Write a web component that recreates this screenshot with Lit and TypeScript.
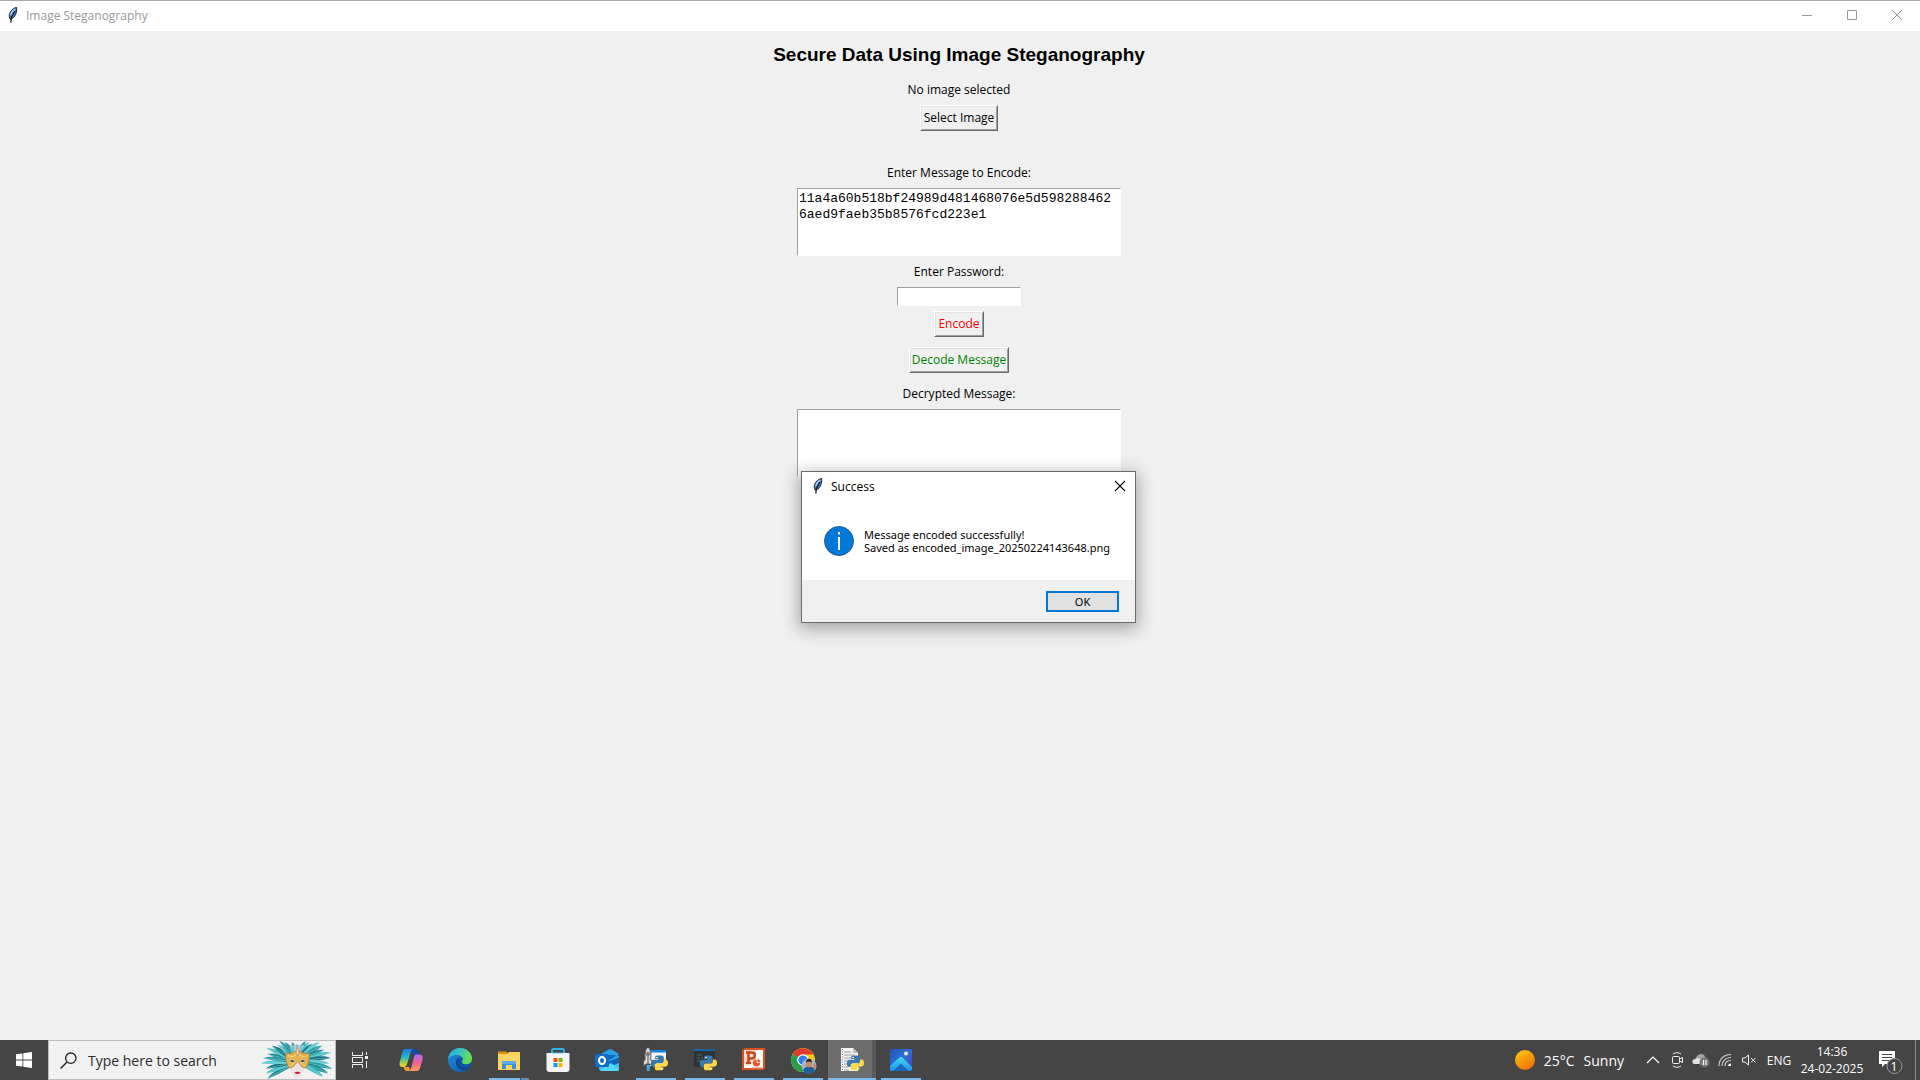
import { LitElement, html, svg, css } from "lit";
import { customElement, state } from "lit/decorators.js";
import { classMap } from "lit/directives/class-map.js";

const quill = html`<svg class="quill" viewBox="0 0 10 16" width="10" height="16" aria-hidden="true">
  <path d="M8.6.4C5.6 1 2.3 3.4 1.4 7.4c-.4 2 .1 3.700.900 4.800C5.600 11.400 7.600 8.600 8.300 5.500 8.700 3.700 8.900 2 8.600.4Z" fill="#4a86cf" stroke="#1c2430" stroke-width="1"/>
  <path d="M7.200 2C5 3.300 3.300 5.600 2.700 8.200" stroke="#b4d2f4" stroke-width="1.300" fill="none"/>
  <path d="M7 4 3.300 10.500 2.800 15.600" stroke="#0b0d12" stroke-width="1.200" fill="none"/>
</svg>`;

const python = svg`<g>
  <path d="M15.500 9.500h3.800c1.500 0 2.500 1 2.500 2.500v3c0 1.500-1 2.300-2.300 2.300h-4.200c-1.600 0-2.600 1-2.600 2.500v1.200h-1.400c-1.600 0-2.500-1.500-2.500-3.600 0-2.300 1-3.700 2.700-3.700h5v-.800h-3.400v-1.200c0-1.500.900-2.200 2.400-2.200Z" fill="#3c78ab"/>
  <path d="M18.900 24.300h-3.800c-1.500 0-2.300-.900-2.300-2.300v-2.300c0-1.400.900-2.200 2.300-2.200h4.200c1.600 0 2.700-1.100 2.700-2.600v-1.300h1.500c1.500 0 2.500 1.500 2.500 3.500 0 2.300-1.100 3.600-2.800 3.600h-4.600v.800h2.900v.700c0 1.400-1 2.100-2.400 2.100Z" fill="#ffd848"/>
  <circle cx="15" cy="11.500" r=".8" fill="#fff"/><circle cx="19.600" cy="22.400" r=".8" fill="#fff"/>
</g>`;

const feathers = Array.from({ length: 27 }, (_, i) => {
  const angle = -116 + (i * 232) / 26;
  const a = (angle * Math.PI) / 180;
  const length = 19 + 17 * Math.abs(Math.sin(a)) ** 1.3 - (i % 3) * 2;
  return { angle, length, bend: angle < 0 ? -2 : 2, tone: ["#1c8b98", "#46bfc0", "#176f84", "#5fc9cd", "#2a9aa8"][i % 5] };
});

const mask = html`<svg class="mask" viewBox="0 0 72 38" width="72" height="38" aria-hidden="true">
  ${feathers.map(
    (f) => svg`<g transform="translate(36 21) rotate(${f.angle})">
      <path d=${`M-1 0C-3 ${-f.length * 0.5} -2.500 ${-f.length * 0.85} ${f.bend} ${-f.length}C2.500 ${-f.length * 0.8} 2 ${-f.length * 0.4} 1 0Z`} fill=${f.tone}/>
      <path d=${`M0 0Q-1 ${-f.length * 0.6} ${f.bend} ${-f.length}`} stroke="#a5e3e0" stroke-width=".4" fill="none"/>
    </g>`,
  )}
  <path d="M29 4h14l-4 10h-6Z" fill="#a9cfd8"/><path d="M32 4v8M36 3v8M40 4v8" stroke="#5b97a6" stroke-width=".8"/>
  <path d="M28 18c0 9 3 17 8.500 18.500C42 35 45 27 45 18Z" fill="#e9e3e6"/>
  <path d="M25 12c3 1 5 1 7-.500l4.500-2.500 4.500 2.500c2 1.500 4 1.500 7 .500 1 5 0 10-3 15-3 0-4.500-1-6-3.500l-2.500-3-2.500 3c-1.500 2.500-3 3.500-6 3.500-3-5-4-10-3-15Z" fill="#e3b04c" stroke="#a9742a" stroke-width=".6"/>
  <path d="M27 14.500c4 2 6.500 1 9.500-2.500 3 3.500 6 4.500 10 2.500M28 24c2 1 4 0 5-2M45 24c-2 1-4 0-5-2" stroke="#f9dd8c" stroke-width="1" fill="none"/>
  <path d="M28.500 19.500c2-1.500 4-1 5.500 1-2 1.500-4 1-5.500-1ZM39 20.500c1.500-2 3.500-2.500 5.500-1-1.500 2-3.500 2.500-5.500 1Z" fill="#3b3138" stroke="#fff" stroke-width=".6"/>
  <path d="M36.500 7c2 2 2 5 0 8-2-3-2-6 0-8Z" fill="#e5cdb0" stroke="#b98540" stroke-width=".5"/>
  <path d="M33.500 31.500c1.200-1 1.800-1 3-.6 1.200-.4 1.800-.4 3 .6-1.800 2-4.200 2-6 0Z" fill="#c81e33"/>
</svg>`;

type App = { name: string; running?: boolean; active?: boolean; split?: boolean; icon: unknown };

const apps: App[] = [
  {
    name: "Copilot",
    icon: svg`<defs>
        <linearGradient id="cpa" x1="0" y1="0" x2="0" y2="1"><stop offset="0" stop-color="#1c7fe6"/><stop offset=".45" stop-color="#25b8c8"/><stop offset=".75" stop-color="#9bcf4a"/><stop offset="1" stop-color="#ffd21f"/></linearGradient>
        <linearGradient id="cpb" x1="0" y1="0" x2="0" y2="1"><stop offset="0" stop-color="#b06cf0"/><stop offset=".5" stop-color="#f0609a"/><stop offset="1" stop-color="#ff9a4c"/></linearGradient>
      </defs>
      <path d="M14 3h4c2 0 2.800 1.400 3.300 3l.8 2.500h-6Z" fill="#1748b5"/>
      <path d="M8.500 3H17c-2 0-2.800 1.500-3.400 3.500l-3.400 11c-.6 2-1.600 3.500-3.600 3.500H6c-3 0-4-2-3.200-5L5.300 6.500C6 4.200 6.700 3 8.500 3Z" fill="url(#cpa)"/>
      <path d="M13 25H10c-2 0-2.700-1.500-3.300-4h5.500Z" fill="#f09a2c"/>
      <path d="M19 8.500h3.300c3 0 4 2 3.200 5l-2 7c-.8 3-1.800 4.500-3.800 4.500H11c2 0 2.700-1.500 3.300-3.500L17 11c.4-1.600 1-2.500 2-2.500Z" fill="url(#cpb)"/>`,
  },
  {
    name: "Microsoft Edge",
    icon: svg`<defs>
        <linearGradient id="eda" x1="0" y1="0" x2="1" y2=".3"><stop offset="0" stop-color="#2aa7e8"/><stop offset=".5" stop-color="#36c3c0"/><stop offset="1" stop-color="#6bdc52"/></linearGradient>
        <linearGradient id="edb" x1="0" y1="0" x2="1" y2="1"><stop offset="0" stop-color="#1e8fe0"/><stop offset="1" stop-color="#1055a8"/></linearGradient>
      </defs>
      <circle cx="14" cy="14" r="12" fill="url(#edb)"/>
      <path d="M2 13.500C2.500 7 7.500 2 14 2c7 0 12 5 12 10.500 0 3.500-2.600 6-6 6-2.800 0-4.300-1.200-4.300-2.300 0-.8 1-1.200 1-3 0-2.200-2.500-4.200-6-4.200-4 0-7.500 2-8.700 4.500Z" fill="url(#eda)"/>
      <path d="M12 12c-3 2-4 10 6 12.500 2.500-.5 5-2.500 6.500-5-6 3.500-12.500.500-12.500-4.500 0-1.200.5-2 1.200-2.800Z" fill="#0c458d"/>
      <path d="M15.700 16.200c-.8-1.500 1.300-2 .9-4 0-.8-2.600-1.200-4.400.2-1 3 1 6 3.500 7 3.500 1.300 6.500.6 8.800-.2.800-.5.500-1.500.500-2.700-1.300 1.400-3 2-5 2-2.500 0-4.300-1.200-4.300-2.300Z" fill="#0e519c"/>`,
  },
  {
    name: "File Explorer",
    running: true,
    split: true,
    icon: svg`<path d="M3 5.500h8.500l2 2.500H3Z" fill="#d99408"/><path d="M3 8h9l2-2h11v18H3Z" fill="#f9cf5e"/>
      <path d="M3 9h22v14H3Z" fill="#fdd565"/>
      <path d="M7 15h14v8h-4v-4h-6v4H7Z" fill="#3e91d8"/><path d="M7 15h14v3H7Z" fill="#58abe8"/>`,
  },
  {
    name: "Microsoft Store",
    icon: svg`<path d="M8 8V5C8 4 8.500 3 9.500 3h9C19.500 3 20 4 20 5v3" fill="none" stroke="#2bb3ee" stroke-width="2"/>
      <path d="M2.500 7h23v16c0 2-1 3-3 3h-17c-2 0-3-1-3-3Z" fill="#f4f4f4"/><path d="M8 7h12" stroke="#5cc4ee" stroke-width="1"/>
      <path d="M9.500 12H13.500v4h-4Z" fill="#f04e1f"/><path d="M14.500 12h4v4h-4Z" fill="#7db900"/><path d="M9.500 17h4v4h-4Z" fill="#00a2ed"/><path d="M14.500 17h4v4h-4Z" fill="#ffb800"/>`,
  },
  {
    name: "Outlook",
    icon: svg`<path d="M5 10 16 3l10 7v4H5Z" fill="#1e8ddb"/><path d="m8 8 10-5 8 5-10 8-8-2Z" fill="#2aa0e6"/>
      <path d="M14 9h9l-7 8-5-2Z" fill="#1766b5"/>
      <path d="M26 10v13c0 1.500-.8 2-2 2H9c-2 0-3-1-3-3v-4Z" fill="#35c3f3"/><path d="M26 11v6L16 21l-4-4Z" fill="#1363b4"/><path d="m7 24 11-7 8 6c0 1.500-1 2-2 2H9Z" fill="#52d9fa"/>
      <rect x="2" y="8" width="14" height="13" rx="1.500" fill="#0f6cc8"/><ellipse cx="9" cy="14.500" rx="3" ry="3.500" fill="none" stroke="#fff" stroke-width="2"/>`,
  },
  {
    name: "Python Launcher",
    running: true,
    icon: svg`<path d="M8 4h16v16H8Z" fill="#eef2f5"/><path d="M8 4h16v2.500H8Z" fill="#1683d8"/>
      <path d="M6 1c-3 3-3.300 7-2.800 12L1.500 16v4L4 18h4l2 2v-4l-1.500-3C9.300 8 9 4 6 1Z" fill="#dcdcdc" stroke="#5a5a5a" stroke-width="1"/>
      <circle cx="6" cy="8" r="1.700" fill="#888" stroke="#444" stroke-width=".6"/><path d="M6 10v8" stroke="#555" stroke-width="1"/>
      <path d="M4.500 19h3.500l-.5 6h-2.500Z" fill="#45a7e8"/>${python}`,
  },
  {
    name: "Python",
    running: true,
    icon: svg`<path d="M3 3h21v18H3Z" fill="#2d3236"/><path d="M3 3h21v2H3Z" fill="#1467a8"/>
      <path d="M6 9h5M6 12h3M10 12h2M6 15h4" stroke="#3f7d4e" stroke-width="1"/>${python}`,
  },
  {
    name: "PowerPoint",
    running: true,
    icon: svg`<path d="M2 4 5 2h20v20l-2 2H2Z" fill="#d9521f"/><path d="M4 4h19v18H4Z" fill="#fff"/>
      <path d="M4 4h12v14H4Z" fill="#f7dccd"/>
      <path d="M8.500 5.500v12M6 6.500h5.500c4.500 0 4.500 6 0 6H9M6 17h5" fill="none" stroke="#c2481c" stroke-width="2.400"/>
      <circle cx="16.500" cy="17" r="3.600" fill="#e4582a"/><path d="M17 16.500v-4a4 4 0 0 1 4 4Z" fill="#e4582a" stroke="#fff" stroke-width=".8"/>
      <path d="M12 22h10" stroke="#e08a67" stroke-width="1.200"/>`,
  },
  {
    name: "Google Chrome",
    running: true,
    icon: svg`<circle cx="14" cy="14" r="12" fill="#f9c80e"/>
      <path d="M14 14 3.600 8A12 12 0 0 1 24.400 8.500H14Z" fill="#e23b2e"/>
      <path d="M14 14 3.600 8A12 12 0 0 0 14 26l5-8Z" fill="#2a9d4c"/>
      <circle cx="14" cy="14" r="5.800" fill="#fff"/><circle cx="14" cy="14" r="4.600" fill="#2f7de9"/>
      <circle cx="20" cy="20" r="7.500" fill="#9db8cf"/>
      <path d="M14 24.500c1-3 3-4 6-4s5 1 6 4a7.500 7.500 0 0 1-12 0Z" fill="#1d5f9c"/>
      <ellipse cx="20" cy="17.500" rx="3" ry="4" fill="#c98a62"/><path d="M17 16.500c0-5 6-5 6 0-2-1.500-4-1.500-6 0Z" fill="#2a201c"/>
      <path d="M25 16.500a7.500 7.500 0 0 1 1.500 7l-2.500-2Z" fill="#d57f52"/>`,
  },
  {
    name: "Image Steganography",
    running: true,
    active: true,
    icon: svg`<path d="M3 2h12l5 5v18H3Z" fill="#f3f3f3"/><path d="M15 2v5h5Z" fill="#bdbdbd"/>
      <path d="M6 6h7M6 9h11M6 12h8M6 15h5M6 18h4M6 21h4M6 24h5" stroke="#9d9d9d" stroke-width="1"/><path d="M4.500 3v22" stroke="#777" stroke-width="1" stroke-dasharray="1 1.500"/>${python}`,
  },
  {
    name: "Photos",
    running: true,
    icon: svg`<defs><linearGradient id="pha" x1="0" y1="0" x2="1" y2="1"><stop offset="0" stop-color="#1c55b5"/><stop offset=".5" stop-color="#2f6fd8"/><stop offset="1" stop-color="#4a3fae"/></linearGradient>
      <linearGradient id="phb" x1="0" y1="0" x2="0" y2="1"><stop offset="0" stop-color="#48dcf8"/><stop offset="1" stop-color="#1c8fe0"/></linearGradient></defs>
      <rect x="3" y="3" width="22" height="22" rx="2" fill="url(#pha)"/><circle cx="19" cy="7.500" r="2" fill="#e8f5ff"/>
      <path d="M3 20 12.500 11.500c1-.9 2-.9 3 0L25 21v2c0 1.300-.7 2-2 2h-2L14 18l-8 7H5c-1.300 0-2-.7-2-2Z" fill="url(#phb)"/>
      <path d="m14 18 8 7H6Z" fill="#1468bd"/>`,
  },
];

@customElement("info-dialog")
class InfoDialog extends LitElement {
  static styles = css`
    :host { display: block; box-sizing: border-box; width: 335px; border: 1px solid #6b6b6b; background: #fff; color: #000;
      font-family: "Noto Sans", sans-serif; font-size: 11px; box-shadow: 0 4px 16px 2px rgba(0, 0, 0, 0.32); }
    .bar { display: flex; align-items: center; box-sizing: border-box; height: 30px; padding: 0 0 2px 11px; }
    .caption { flex: 1; margin: 0 0 0 8px; font-size: 12px; font-weight: 400; font-family: "Open Sans", sans-serif; }
    .close { display: grid; place-items: center; width: 30px; height: 28px; padding: 0; border: 0; background: none; }
    .body { display: flex; align-items: center; gap: 10px; height: 78px; padding: 0 22px; }
    .text { margin: 0; line-height: 13px; white-space: pre; }
    .foot { display: flex; align-items: center; justify-content: flex-end; height: 42px; padding-right: 16px; background: #f0f0f0; }
    .ok { width: 73px; height: 21px; padding: 0; border: 2px solid #0078d7; background: #e1e1e1; color: #000; font: inherit; line-height: 17px; }
  `;

  render() {
    return html`
      <div class="bar">
        ${quill}
        <h2 class="caption">Success</h2>
        <button class="close" aria-label="Close" @click=${this.dismiss}>
          <svg width="12" height="12" viewBox="0 0 12 12"><path d="m1 1 10 10M11 1 1 11" stroke="#000" stroke-width="1.100"/></svg>
        </button>
      </div>
      <div class="body">
        <svg width="30" height="30" viewBox="0 0 30 30" aria-hidden="true">
          <circle cx="15" cy="15" r="14.500" fill="#0078d7" stroke="#1d5c94"/>
          <path d="M15 11v13" stroke="#fff" stroke-width="2"/><path d="M15 6v2.500" stroke="#fff" stroke-width="2"/>
        </svg>
        <p class="text">Message encoded successfully!
Saved as encoded_image_20250224143648.png</p>
      </div>
      <div class="foot"><button class="ok" @click=${this.dismiss}>OK</button></div>
    `;
  }

  private dismiss() {
    this.dispatchEvent(new CustomEvent("dismiss"));
  }
}

@customElement("task-bar")
class TaskBar extends LitElement {
  static styles = css`
    :host { display: flex; align-items: stretch; height: 40px; background: #454545; color: #fff; font-family: "Open Sans", sans-serif; font-size: 12px; }
    button { display: grid; place-items: center; padding: 0; border: 0; background: none; color: inherit; font: inherit; }
    .start, .view { width: 48px; }
    .view { margin-right: 3px; }
    .search { display: flex; align-items: center; box-sizing: border-box; width: 288px; padding: 0 2px 0 11px; border: 1px solid #bcbcbc; background: #f1f1f1; }
    .query { flex: 1; min-width: 0; margin-left: 11px; padding: 0; border: 0; outline: 0; background: none; color: #2c2c2c; font: 14px "Open Sans", sans-serif; }
    .query::placeholder { color: #2c2c2c; opacity: 1; }
    .mask { flex: none; }
    .apps { display: flex; gap: 1px; flex: 1; }
    .app { position: relative; width: 48px; }
    .app svg { width: 28px; height: 28px; }
    .app.active { background: linear-gradient(90deg, #6d6d6d 44px, #5a5a5a 44px); }
    .app.running::after { content: ""; position: absolute; left: 4px; right: 4px; bottom: 0; height: 2px; background: #76b9ed; }
    .app.active::after { left: 0; right: 0; }
    .app.split::after { background: linear-gradient(90deg, #76b9ed 31px, #454545 31px, #454545 32px, #5b8fb9 32px); }
    .weather { display: flex; align-items: center; gap: 9px; margin-right: 17px; font-size: 14px; }
    .tray { display: flex; align-items: center; }
    .tray .icon { width: 24px; height: 40px; }
    .lang { width: 36px; height: 40px; }
    .clock { width: 70px; height: 40px; align-content: center; line-height: 17px; }
    .notes { width: 48px; height: 40px; }
    .peek { width: 5px; height: 40px; border-left: 1px solid #8d8d8d; box-sizing: border-box; }
    .count { font: 13px "Open Sans", sans-serif; fill: #fff; text-anchor: middle; }
  `;

  render() {
    return html`
      <button class="start" aria-label="Start">
        <svg width="16" height="16" viewBox="0 0 16 16"><path d="M0 2.300 6.500 1.400v6.200H0ZM7.300 1.300 16 0v7.600H7.300ZM0 8.400h6.500v6.200L0 13.700ZM7.300 8.400H16V16l-8.700-1.300Z" fill="#fff"/></svg>
      </button>
      <label class="search">
        <svg width="17" height="17" viewBox="0 0 17 17" aria-hidden="true"><circle cx="10.800" cy="6.200" r="5.200" fill="none" stroke="#222" stroke-width="1.300"/><path d="M7 10 .6 16.400" stroke="#222" stroke-width="1.400"/></svg>
        <input class="query" type="text" aria-label="Search" placeholder="Type here to search" />
        ${mask}
      </label>
      <button class="view" aria-label="Task View">
        <svg width="16" height="16" viewBox="0 0 16 16" fill="none" stroke="#f2f2f2"><path d="M.5 0v3.500h10V0M.5 16v-3.500h10V16M.5 5.500h10v5H.5ZM14.500 0v3M14.500 9v7"/><path d="M13 4h3v3h-3Z" fill="#f2f2f2" stroke="none"/></svg>
      </button>
      <nav class="apps" aria-label="Applications">
        ${apps.map(
          (app) => html`<button class=${classMap({ app: true, running: !!app.running, active: !!app.active, split: !!app.split })} aria-label=${app.name}>
            <svg viewBox="0 0 28 28">${app.icon}</svg>
          </button>`,
        )}
      </nav>
      <button>
        <span class="weather">
          <svg width="20" height="20" viewBox="0 0 20 20"><defs><linearGradient id="sun" x1=".2" y1="0" x2=".8" y2="1"><stop offset="0" stop-color="#fdc50b"/><stop offset="1" stop-color="#ed6c09"/></linearGradient></defs><circle cx="10" cy="10" r="10" fill="url(#sun)"/></svg>
          <span>25°C</span><span>Sunny</span>
        </span>
      </button>
      <div class="tray">
        <button class="icon" aria-label="Show hidden icons"><svg width="14" height="8" viewBox="0 0 14 8"><path d="m1 7 6-6 6 6" fill="none" stroke="#fff" stroke-width="1.200"/></svg></button>
        <button class="icon" aria-label="Meet Now"><svg width="14" height="16" viewBox="0 0 14 16" fill="none" stroke="#f2f2f2"><rect x="2.500" y="4.500" width="7" height="7" rx="1"/><path d="m9.500 7 3-1.500v5l-3-1.500M3 2C5 .3 9 .3 11 2M3 14c2 1.700 6 1.700 8 0"/></svg></button>
        <button class="icon" aria-label="OneDrive"><svg width="18" height="16" viewBox="0 0 18 16"><path d="M4 9C3 5 6 2 9 2c3 0 4 2 4.500 4C16 6 17 9 15 11H5Z" fill="#a3a3a3"/><path d="M3 12c-3 0-4-4 0-5 2-2 5-1 6 1 2 0 2 4 0 4Z" fill="#e2e2e2"/><circle cx="12.500" cy="10.500" r="5" fill="#777"/><path d="M11.500 8v5M14 8v5" stroke="#fff" stroke-width="1.200"/></svg></button>
        <button class="icon" aria-label="Network"><svg width="14" height="14" viewBox="0 0 14 14" fill="none" stroke="#cfcfcf" stroke-width="1.200"><path d="M1 13C1 6 6 1.500 13 1.500M4 13c0-5 3.500-8.500 9-8.500M7 13c0-3.500 2.500-5.500 6-5.500"/><path d="M10 13c0-1.500 1-2.500 3-2.500V13Z" fill="#fff" stroke="none"/></svg></button>
        <button class="icon" aria-label="Volume muted"><svg width="16" height="14" viewBox="0 0 16 14" fill="none" stroke="#f2f2f2"><path d="M1.500 5v4H4l3.500 3V2L4 5ZM10 5l4.500 4.500M14.500 5 10 9.500"/></svg></button>
        <button class="lang">ENG</button>
        <button class="clock"><span>14:36</span><span>24-02-2025</span></button>
        <button class="notes" aria-label="1 notification">
          <svg width="28" height="28" viewBox="0 0 28 28"><path d="M2 5h16v13H8l-3 3v-3H2Z" fill="#fff"/><path d="M5 8.500h10M5 11.500h10M5 14.500h7" stroke="#454545"/><circle cx="17.500" cy="20" r="7.500" fill="#454545" stroke="#9a9a9a"/><text class="count" x="17" y="25">1</text></svg>
        </button>
        <button class="peek" aria-label="Show desktop"></button>
      </div>
    `;
  }
}

@customElement("app-root")
class AppRoot extends LitElement {
  static styles = css`
    :host { display: flex; flex-direction: column; min-height: 100vh; background: #f0f0f0; color: #000; font-family: "Open Sans", sans-serif; font-size: 12px; }
    .window { position: relative; display: flex; flex-direction: column; flex: 1; }
    .titlebar { display: flex; align-items: center; box-sizing: border-box; height: 31px; padding: 0 1px 2px 8px; border-top: 1px solid #a9a9a9; background: #fff; color: #999; }
    .title { flex: 1; margin-left: 8px; }
    .control { display: grid; place-items: center; width: 45px; height: 28px; padding: 0; border: 0; background: none; }
    .form { display: flex; flex-direction: column; align-items: center; padding: 10px 2px 0 0; }
    .heading { margin: 0 0 11px; font: bold 19px/28px "Liberation Sans", sans-serif; }
    .label { margin-bottom: 5px; line-height: 20px; }
    .button { box-sizing: border-box; height: 26px; padding: 0 0 2px; border: 1px solid; border-color: #fff #696969 #696969 #fff;
      box-shadow: inset 1px 1px #e3e3e3, inset -1px -1px #a0a0a0; background: #f0f0f0; color: #000; font: inherit; white-space: nowrap; }
    .select { width: 78px; margin-bottom: 32px; }
    .encode { width: 50px; margin-bottom: 10px; color: #f00; }
    .decode { width: 100px; margin-bottom: 11px; color: #008000; }
    .area, .entry { box-sizing: border-box; border: 1px solid #fff; border-color: #a0a0a0 #fff #fff #a0a0a0; background: #fff; color: #000; outline: 0; }
    .area { width: 324px; height: 68px; margin: 0 0 6px; padding: 2px 4px 0 1px; resize: none; overflow: hidden; word-break: break-all; font: 13px/16px "Liberation Mono", monospace; }
    .entry { width: 124px; height: 19px; margin-bottom: 5px; padding: 0 2px; font: inherit; }
    .dialog { position: absolute; top: 471px; left: calc(50% - 159px); }
  `;

  @state() private showDialog = true;

  render() {
    return html`
      <main class="window">
        <header class="titlebar">
          ${quill}
          <span class="title">Image Steganography</span>
          <button class="control" aria-label="Minimize"><svg width="10" height="10"><path d="M0 5.500h10" stroke="#999"/></svg></button>
          <button class="control" aria-label="Maximize"><svg width="10" height="10"><path d="M.5.5h9v9h-9Z" fill="none" stroke="#999"/></svg></button>
          <button class="control" aria-label="Close"><svg width="10" height="10"><path d="m0 0 10 10M10 0 0 10" stroke="#999"/></svg></button>
        </header>
        <section class="form">
          <h1 class="heading">Secure Data Using Image Steganography</h1>
          <span class="label">No image selected</span>
          <button class="button select">Select Image</button>
          <label class="label" for="message">Enter Message to Encode:</label>
          <textarea class="area" id="message" spellcheck="false" .value=${"11a4a60b518bf24989d481468076e5d5982884626aed9faeb35b8576fcd223e1"}></textarea>
          <label class="label" for="password">Enter Password:</label>
          <input class="entry" id="password" type="password" />
          <button class="button encode">Encode</button>
          <button class="button decode">Decode Message</button>
          <label class="label" for="decrypted">Decrypted Message:</label>
          <textarea class="area" id="decrypted" spellcheck="false"></textarea>
        </section>
        ${this.showDialog
          ? html`<info-dialog class="dialog" role="dialog" aria-label="Success" @dismiss=${() => (this.showDialog = false)}></info-dialog>`
          : null}
      </main>
      <task-bar></task-bar>
    `;
  }
}
